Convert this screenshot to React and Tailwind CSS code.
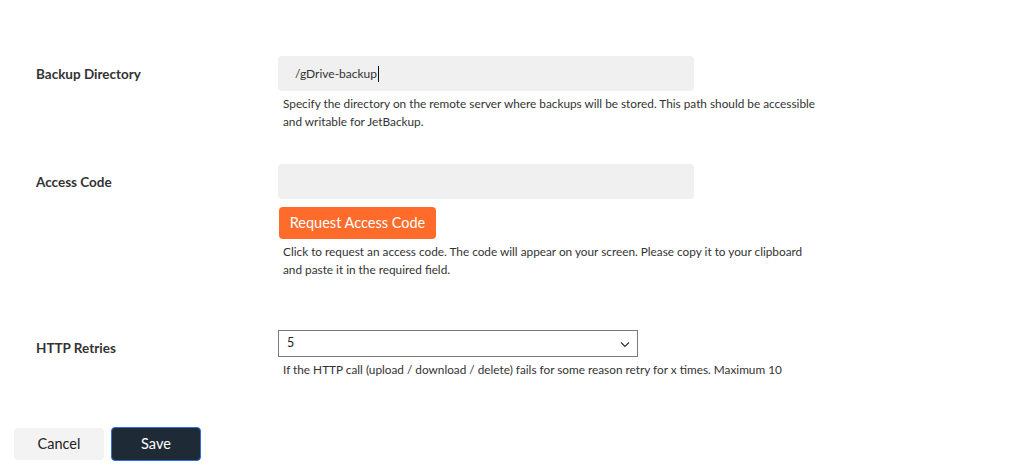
function Field({ label, children, labelClass = "" }) {
  return (
    <div className="flex">
      <div className={`w-[242px] shrink-0 text-[13.5px] font-bold text-[#333] ${labelClass}`}>
        {label}
      </div>
      <div className="flex flex-col">{children}</div>
    </div>
  );
}

function Help({ children }) {
  return (
    <p className="mt-[4px] pl-[5px] whitespace-nowrap text-[11.8px] leading-[18px] text-[#333]">
      {children}
    </p>
  );
}

export default function App() {
  return (
    <div
      className="w-[1022px] h-[474px] bg-white relative overflow-hidden"
      style={{ fontFamily: 'Lato, "Noto Sans", sans-serif' }}
    >
      <div className="pl-[36px] pt-[56px]">
        <Field label="Backup Directory" labelClass="pt-[8px]">
          <div className="w-[416px] h-[35px] bg-[#f0f0f0] rounded-[4px] flex items-center pl-[17px] text-[12px] text-[#333]">
            /gDrive-backup<span className="w-px h-[16px] bg-[#111] ml-px" />
          </div>
          <Help>
            Specify the directory on the remote server where backups will be
            stored. This path should be accessible
            <br />
            and writable for JetBackup.
          </Help>
        </Field>

        <div className="mt-[33px]">
          <Field label="Access Code" labelClass="pt-[8px]">
            <div className="w-[416px] h-[35px] bg-[#f0f0f0] rounded-[4px]" />
            <button className="mt-[8px] w-[157px] h-[32px] ml-px bg-[#ff6b2b] text-white text-[14.5px] rounded-[4px] flex items-center justify-center">
              Request Access Code
            </button>
            <Help>
              Click to request an access code. The code will appear on your
              screen. Please copy it to your clipboard
              <br />
              and paste it in the required field.
            </Help>
          </Field>
        </div>

        <div className="mt-[51px]">
          <Field label="HTTP Retries" labelClass="pt-[8px]">
            <div className="w-[360px] h-[27px] border border-[#7a7a7a] flex items-center justify-between pl-[8px] pr-[6px] text-[12.5px] text-[#222]">
              <span>5</span>
              <svg width="12" height="12" viewBox="0 0 12 12" fill="none">
                <path d="M2 4.5 6 8.5 10 4.5" stroke="#333" strokeWidth="1.2" />
              </svg>
            </div>
            <Help>
              If the HTTP call (upload / download / delete) fails for some
              reason retry for x times. Maximum 10
            </Help>
          </Field>
        </div>
      </div>

      <div className="absolute left-[14px] top-[427px] flex items-center gap-[7px]">
        <button className="w-[90px] h-[32px] bg-[#f3f3f3] rounded-[4px] text-[14.5px] text-[#222]">
          Cancel
        </button>
        <button className="w-[90px] h-[34px] bg-[#1f2a37] border border-[#2f6fe0] rounded-[4px] text-[14.5px] text-white">
          Save
        </button>
      </div>
    </div>
  );
}
